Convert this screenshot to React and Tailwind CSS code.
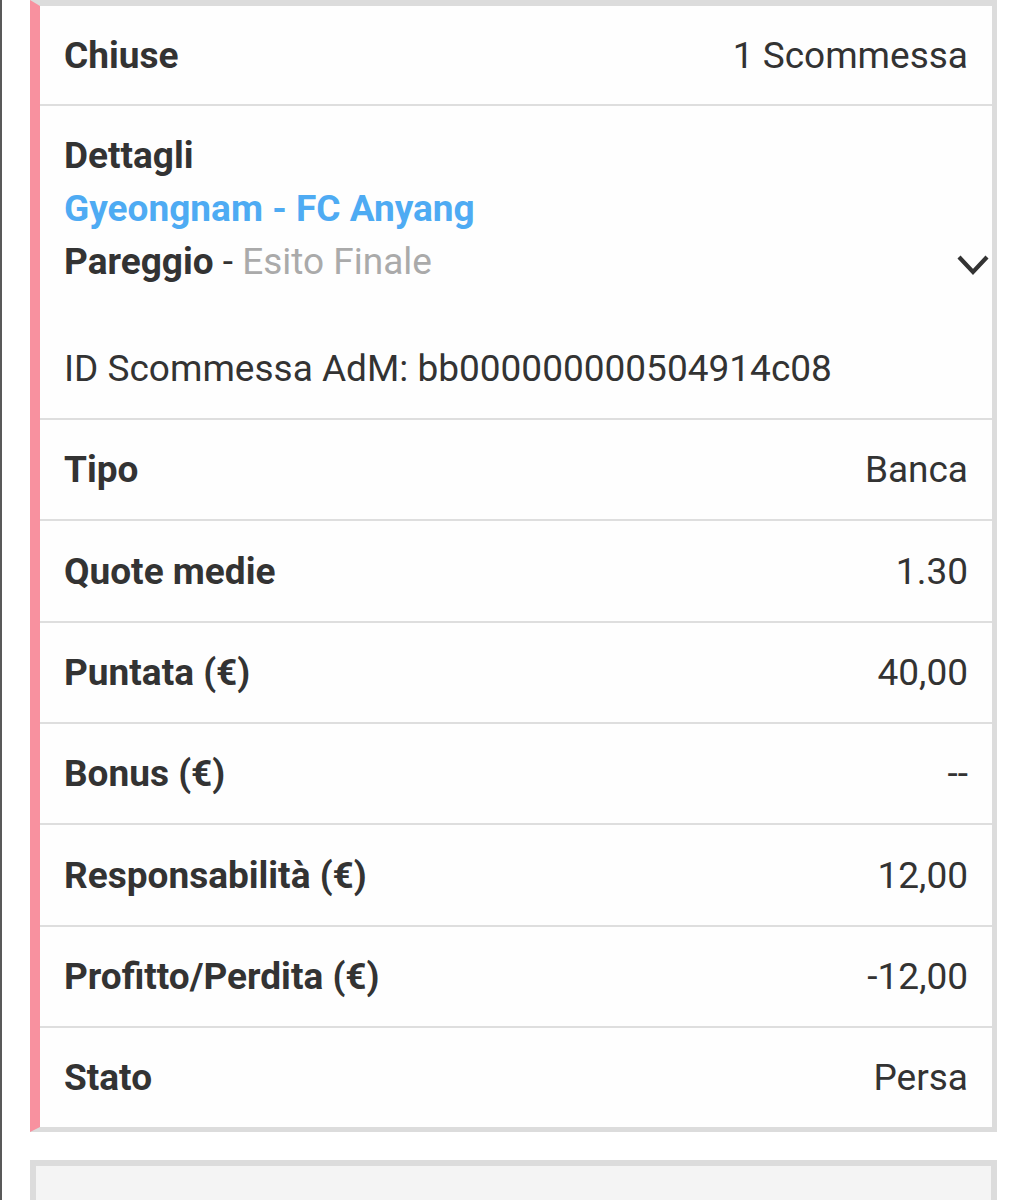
import React from 'react';

const rows = [
  { label: 'Tipo', value: 'Banca', h: 'h-[101px]' },
  { label: 'Quote medie', value: '1.30', h: 'h-[102px]' },
  { label: 'Puntata (€)', value: '40,00', h: 'h-[101px]' },
  { label: 'Bonus (€)', value: '--', h: 'h-[101px]' },
  { label: 'Responsabilità (€)', value: '12,00', h: 'h-[102px]' },
  { label: 'Profitto/Perdita (€)', value: '-12,00', h: 'h-[101px]' },
  { label: 'Stato', value: 'Persa', h: 'h-[99px]' },
];

const Chevron = () => (
  <svg viewBox="0 0 32 22" className="w-[32px] h-[22px] -mr-[21px] mt-[6px]" fill="none" stroke="#333" strokeWidth="4.2" strokeLinecap="butt" strokeLinejoin="miter">
    <path d="M2 3 L16 18 L30 3" />
  </svg>
);

const Row = ({ label, value, h, last }) => (
  <div className={`${h} flex items-center justify-between px-[24px] ${last ? '' : 'border-b-2 border-[#dedede]'}`}>
    <span className="font-bold">{label}</span>
    <span>{value}</span>
  </div>
);

const App = () => {
  return (
    <div className="min-h-[1200px] bg-white border-l-2 border-[#595959] pl-[28px] pr-[28px] text-[37px] leading-[53px] text-[#333]" style={{ fontFamily: 'Roboto, "Noto Sans", sans-serif' }}>
      {/* Bet card */}
      <div className="bg-[#fefefe] border-t-[6px] border-r-[5px] border-b-[5px] border-l-[10px] border-t-[#dcdcdc] border-r-[#dcdcdc] border-b-[#dcdcdc] border-l-[#f8919f]">
        <div className="h-[100px] flex items-center justify-between px-[24px] border-b-2 border-[#dedede]">
          <span className="font-bold">Chiuse</span>
          <span>1 Scommessa</span>
        </div>

        <div className="px-[24px] pt-[23px] pb-[23px] border-b-2 border-[#dedede]">
          <div className="font-bold">Dettagli</div>
          <div className="font-bold text-[#4eabf3]">Gyeongnam - FC Anyang</div>
          <div className="flex items-center justify-between">
            <span>
              <span className="font-bold">Pareggio</span> - <span className="text-[#aaaaaa]">Esito Finale</span>
            </span>
            <Chevron />
          </div>
          <div className="mt-[54px]">ID Scommessa AdM: bb000000000504914c08</div>
        </div>

        {rows.map((r, i) => (
          <Row key={r.label} label={r.label} value={r.value} h={r.h} last={i === rows.length - 1} />
        ))}
      </div>

      {/* Next card, cut off */}
      <div className="mt-[28px] h-[80px] bg-[#f4f4f4] border-[6px] border-b-0 border-[#dcdcdc]" />
    </div>
  );
};

export default App;
